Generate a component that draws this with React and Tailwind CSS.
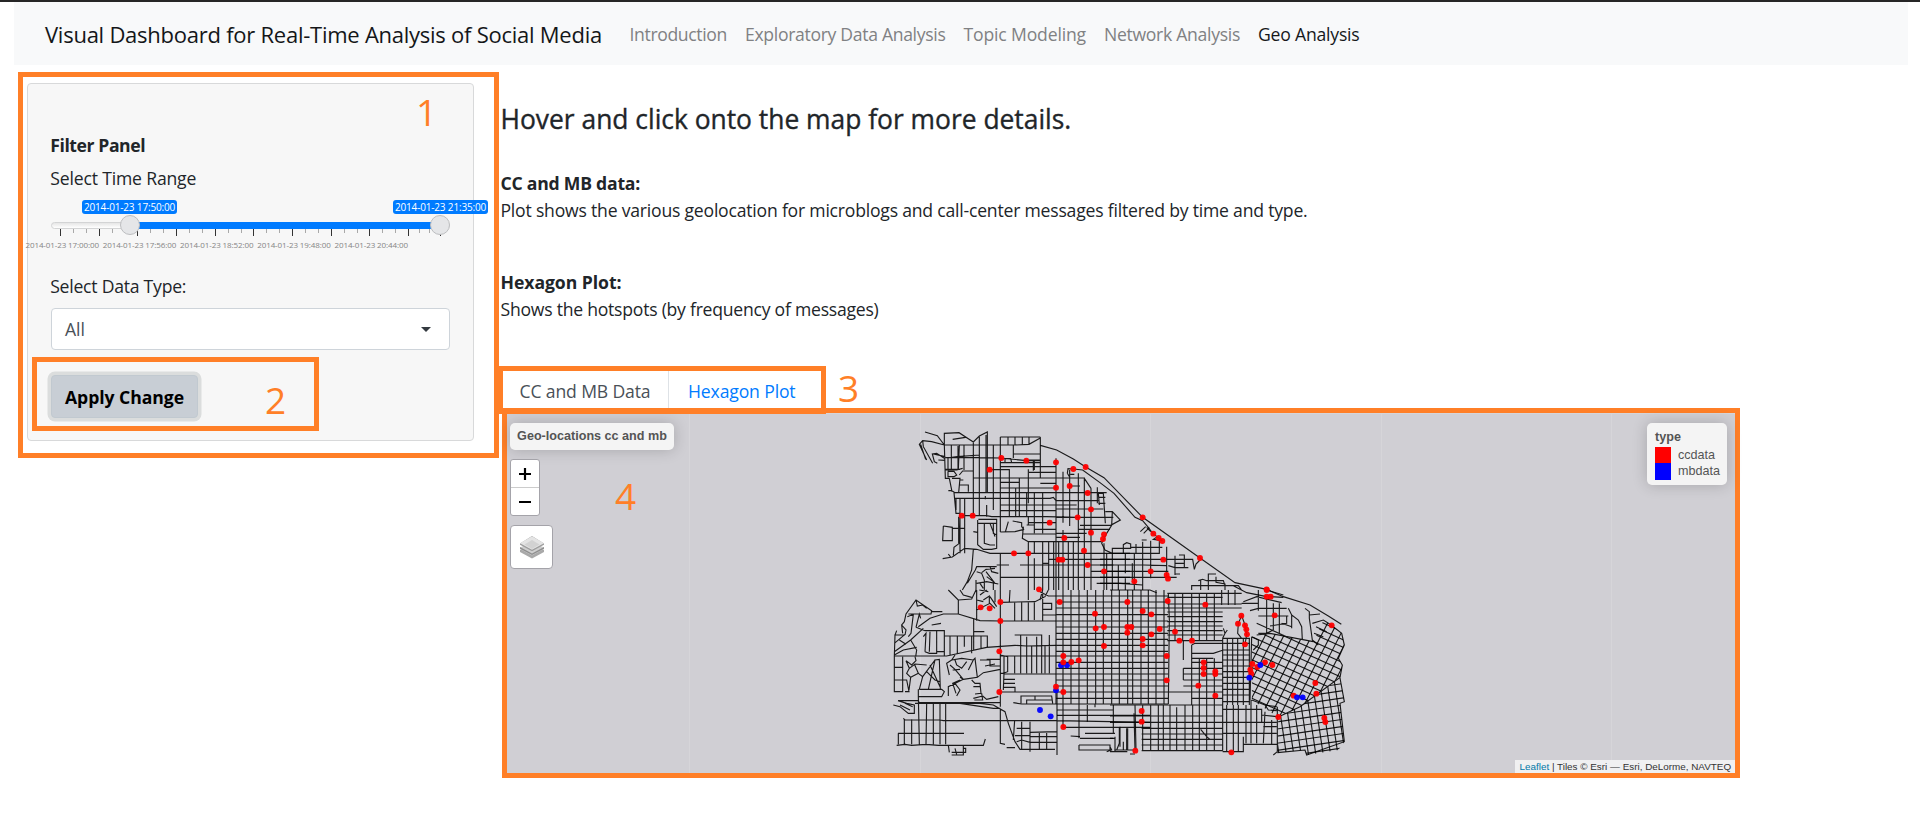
const NAV = [
  { label: "Introduction", cls: "w-[97.5px] tracking-[-0.36px] text-[#808183]" },
  { label: "Exploratory Data Analysis", cls: "w-[200.5px] tracking-[-0.32px] text-[#808183]" },
  { label: "Topic Modeling", cls: "w-[122.5px] tracking-[-0.161px] text-[#808183]" },
  { label: "Network Analysis", cls: "w-[136px] tracking-[-0.298px] text-[#808183]" },
  { label: "Geo Analysis", cls: "w-[101.5px] tracking-[-0.207px] text-[#16181a]" },
];

/* Street network, split in quadrants that share one drawing scale. */
const range = (a, b, n) => Array.from({ length: n }, (_, i) => a + ((b - a) * i) / (n - 1));
const hs = (ys, x1, x2) => ys.map((y) => `M${x1} ${y}H${x2}`).join("");
const vs = (xs, y1, y2) => xs.map((x) => `M${x} ${y1}V${y2}`).join("");

const COAST =
  "M481 106L530 120L580 147L617 171L672 203L788 322L960 444L1065 518L1160 538L1210 560L1290 585L1345 618L1384 643" +
  "M580 177L608 180L660 218L702 250L765 322L788 332L805 352L818 370L847 392";

const NW =
  "M135 66L172 77L193 105M193 105V70L237 68L280 96L298 78L322 66V246M218 88L256 82M193 105H405L447 103L481 84V204M361 81H481M361 81V366" +
  "M384 81V105M405 81V105M427 81V105M447 81V103M193 105L155 95L128 92L118 103L140 150M122 103L137 148M128 92L130 110L158 160" +
  "M193 145L170 130L157 132L163 155L172 160M160 132L196 140M175 150L196 151M193 105L196 205H208M204 143V182M214 105V180M234 108V178M252 105V180M238 105L235 178" +
  "M196 143H210L232 140L298 135L298 143H196M298 143L361 144L440 152H481M400 132H481M361 158H481M361 170H528M196 180H230L248 175" +
  "M204 184H222L230 195L222 200H204V184M238 195L248 183H280M196 178H240M280 96V315M298 80V315M318 75V246M340 105V300M320 285V320M316 258V268" +
  "M375 158V146H392L395 158M400 105V144M460 150V182M447 150H481M328 179H388V210M280 204H615M361 217H418V205M361 234H528M361 248H680M481 220H528" +
  "M445 178V280M447 187H528M463 150V180M528 145V342M418 217V318M388 190V318M407 235V318M440 248V318M463 248V318M488 248V318M205 242H215L225 248H361M208 205L216 245M216 205H240L236 248" +
  "M238 225H265V245M240 210H250M225 265H510L520 262L528 272M222 248L228 310H240M228 265V300M240 265V430M245 317H320L335 320H500L590 322M254 265V430M236 320V400" +
  "M361 285H590M361 302H528M528 272H655M528 297H670M190 348L188 392H217V352L190 348M217 355H254M188 446L217 441L254 415L290 418L330 430H700" +
  "M236 330L238 400L222 412L220 436M205 432L213 443M295 328H350V415L335 418H310L293 404V330M293 340H350M313 355V400L330 405H345M313 340V355M313 340H340V370L350 375" +
  "M280 365L293 367M330 340L345 380M361 366L405 365L432 358M385 335L376 366M398 333L425 338V350L432 360M430 350L427 385L445 395H665M427 372H528" +
  "M445 320V345M463 322V370M488 322V370M463 358H528M445 338H528M440 345H463M528 382H600M528 370H620M595 358H690M528 322H700" +
  "M549 185V338M569 180V348M595 190V540M613 205V540M633 235V540M652 232V280M613 205L633 235M652 250H670L676 340M655 262H676M655 280H676" +
  "M676 305H697L721 330L692 346H600M697 305L695 346L680 370L665 400L675 420L697 430H750M655 250L658 285M562 190L564 176L580 177M571 193H583M562 190L571 205M569 228H600" +
  "M445 395V540M463 395V430M488 395V460H505M463 445V540M506 395V540M521 394V540M536 394V540M549 360V540M565 394V540M580 394V540" +
  "M505 448H750M420 465H700M633 484H750M361 502H750M650 520H750M350 465H387M361 430V540M280 418L275 480L262 515L247 540" +
  "M286 480L290 470H350M286 480L262 520M290 485L305 490L313 510V540M305 488L318 478L345 475M290 520L320 515L355 522M318 485L345 520M320 500L340 515V540M288 510V540M330 470L335 485L355 490M300 520L310 535" +
  "M488 460V540M528 342V540";

const NE =
  "M121 365L137 350M131 370L148 353M152 365L140 352M172 380L160 388L187 392M37 430V415H92V402L80 398L70 404V428M37 430H178V390M92 412H187M108 402V430M128 395V500M125 390H140" +
  "M152 392V505M200 410V505M0 448H278L283 478L288 462L300 450M0 465H130L200 467M0 484H205M0 502H230M225 437V495M237 435H253V473M205 467L225 473H265M225 460H253M225 492H240" +
  "M12 400V540M20 430V540M37 430V540M55 465V540M76 430V490M97 460V510M103 430V540M128 500V540M0 520H60L128 525M76 505V540" +
  "M325 540V492H348M295 512L308 508L320 512M275 540V527H415L425 540M302 510V540M320 512H370L375 527M348 500V517L375 522V540M400 527L440 548L500 560";

const SW =
  "M43 307V198L45 135L50 122M43 135H75M43 160L75 133M43 185L92 150L130 115M43 195L70 180L110 172M58 150L78 163M43 198H200L320 172L405 166L440 168L528 166" +
  "M75 135L78 120L65 105L73 95L78 72L108 30L155 62L153 72H85M155 65H187M108 30L112 48L128 45L140 55M65 105L68 130M82 80L100 73L93 130L85 140M108 112L118 72L122 85M108 112L135 122H193" +
  "M115 110L150 85L190 72H235L300 92L361 93H528M235 72V30L205 0M235 30L275 27L288 0M240 0L250 15L275 22M290 0V92M290 60L330 40L345 55M300 15L320 0M310 30L328 18V40M330 20L350 50M345 0V37M290 30L310 35M298 0L325 5" +
  "M92 150L110 180L107 200M135 185L148 190H170V120M130 140L138 130L135 185M150 125L148 185M155 105L183 100M193 120V198M193 138H322V172M210 138V195M232 138V190M253 138V170M275 138V190M281 88V180M281 125H313M303 138V175M170 185H193" +
  "M68 200V305H43M43 232H68M43 270H80L87 305H75M78 212L95 225L108 212L105 200M78 212L88 235L80 250L92 262L115 250L103 222M88 235L105 222L140 225M92 262L87 300M115 250L128 260L165 210L178 208L181 298M118 298H185L193 305L185 320H115V298" +
  "M140 245L165 270L180 275M128 260L118 298M150 225L180 290M165 210L145 298M208 255L200 220L215 210L225 195M215 210L245 205L280 210L285 205L292 262L250 268L205 290V318M225 210L230 225L245 235L260 215M210 225L225 238L250 268M218 240L240 238" +
  "M225 280L240 300L230 318M240 270L218 280L228 310M250 268L240 262M280 210L265 240M292 262L310 248L361 238M300 210H330V228H361M315 228L345 222M320 208H361M275 270L285 280H300L303 310L285 312M280 290H300M283 330H308L305 310M308 318L320 328L355 320M280 325L308 318" +
  "M361 0V350M361 37L465 35L495 20L505 0M390 0L388 35M404 37V93M425 37V93M445 37V93M463 35V90M488 12V93M488 40H515V58H488M488 75H528M445 0V30M361 198H528M361 195L383 200V245L370 250M361 250H372V198M404 198V250M404 135H485V250" +
  "M422 135V250M440 140V250M455 168V250M470 140V250M508 135V250M495 168V250M372 250L370 300M372 268H405M372 280H405M372 292H405V306M370 252H528M361 306H528M400 338L425 342H528M423 340V318H515L518 340M440 342V330H515M465 318V330" +
  "M54 332H115L118 340H300L340 345L361 357L375 365L385 400L405 455L420 478H450M105 340H240L340 355H361M40 345L60 350L85 370H103V345L80 340L54 332M60 345L90 360M75 340L98 350M115 338H361M115 320L118 463M140 340L138 463M160 340V463M180 340V463M197 340V463" +
  "M70 385L75 390H180L190 392H530L810 397M73 388V463M95 388V463M55 430V463M54 430H252M50 466L75 463L95 466L138 463L175 466H310L316 447M205 466L208 487M215 495H250V466M225 475L230 493M250 475H257V487H215" +
  "M361 357V460L375 463M380 473H405M404 390L400 450M425 395V478M450 395V485M410 415H450M405 437H450M410 455L425 450L450 457H530M450 427L530 425M450 440H530M450 478H525M478 427V480M500 427V480M531 300V495M572 438L600 440" +
  "M488 0L480 30M480 5L505 18H528";

const CENTER =
  hs([18, 36, 54, 74, 93, 111, 130, 148, 166, 184, 198, 217, 235, 252, 270, 288, 306, 325, 342], 528, 864) +
  vs([528, 549, 573, 597, 622, 647, 670, 695, 718, 743, 758, 783, 805, 828, 852], 0, 342) +
  "M531 360H700M531 376H810M549 342V412H810M615 430H705M600 445H700M597 465H690V480H597V465M597 342V445M622 345V395M645 342V352M700 345V430M718 410V460L710 480M743 415V480M762 370L765 480M680 485L695 480L690 470M704 480H762";

const SE =
  "M175 10L178 90L175 342M220 150V210M220 235V270" +
  hs([10, 22, 42, 54, 66, 80, 95, 108, 122, 135, 152], 172, 338) +
  vs([195, 218, 245, 268, 290, 313], 8, 152) +
  "M335 0V45M355 0V45M375 0V45M330 10H395M330 42H395M0 0H120L140 8M338 54H395M245 165L255 160H345M245 190H310L340 180M245 165V345M245 205H310" +
  hs([235, 252, 270, 288], 220, 338) +
  hs([217, 325], 245, 338) + hs([306, 345], 175, 338) +
  vs([268, 290, 313], 205, 345) +
  vs([338, 352, 368, 383, 400, 418], 145, 345) +
  hs([145, 160, 180, 195, 210, 228, 245, 262, 280, 298, 315, 335], 338, 420) +
  hs([378, 397, 415, 432, 448, 465, 482], 95, 338) +
  vs([98, 122, 145, 160, 180, 225, 248, 268, 290, 313, 338], 345, 482) +
  "M75 345L78 480M0 345H175M0 378H95M0 397H95M200 352V482M272 418L290 440L300 448M50 415V480M30 410V470M15 440V485M0 445H15M0 485H52M60 492H75M40 455V480" +
  "M338 358H455V397M338 397H500M338 430H500M338 485H400V440M400 463H502M350 345V485M370 345V485M385 345V485M408 345V460M423 330V460M440 345V460M465 365L460 460M485 390V463M455 375L500 380M460 410H500M465 345L500 350M425 330L465 345L475 360L500 362M502 350V485M490 495L502 485" +
  "M395 145L383 130L385 100L395 77L405 105L410 135L405 162M340 115L345 130L352 120M345 130L338 145M400 35L440 20L515 38M395 40L445 40M420 62L445 55H530M445 78H535M440 100L480 118L530 140M480 108L530 100V78M445 130L470 130L490 120M445 0V62M470 25V130M490 40V120M508 40V130M515 100L545 110M545 75V115M470 0L520 15M480 20L520 22" +
  "M425 140L445 150V165L430 180M535 55L545 75L565 90L575 110L577 150M585 55L598 65V85L607 150L625 165M598 75L630 72M607 100L640 90L665 106M618 110L650 125M612 130L640 140" +
  "M665 106L695 130L703 165L685 205L697 225L690 262L570 350L505 381M425 140L420 330M440 135L480 130L610 155";

const TILT_A = range(-240, 336, 26).map((y) => `M400 ${y}L720 ${y + 145}`).join("");
const TILT_B = range(330, 890, 21).map((x) => `M${x} 400L${x + 170} 70`).join("");
const TILT_C = range(290, 590, 15).map((y) => `M490 ${y}L715 ${y - 33}`).join("");
const TILT_D = range(450, 715, 13).map((x) => `M${x} 260L${x + 36} 500`).join("");

/* Message locations as x, y pairs in the same units as the quadrants. */
const RED_NW = [364,144,439,152,329,179,528,157,580,177,617,171,569,228,528,233,623,249,633,298,593,322,509,338,245,317,278,317,633,368,672,373,669,387,553,384,612,422,402,430,445,430,536,449,547,449,623,465,672,484,477,538];
const RED_NE = [128,322,160,371,176,384,187,393,190,449,300,444,152,484,200,495,204,506,103,514,500,538];
const RED_SW = [361,36,302,52,329,55,361,93,539,36,645,71,647,115,672,111,742,111,742,128,358,184,672,168,550,198,550,217,574,216,596,211,528,290,550,306,358,306,550,411];
const RED_SE = [52,36,173,33,98,63,124,73,64,111,149,117,195,125,124,133,98,147,98,166,208,152,246,152,286,44,470,0,470,20,482,20,494,76,394,77,384,101,405,106,409,118,411,133,405,163,665,106,170,198,170,271,281,217,281,234,281,252,316,244,316,252,265,287,316,317,427,222,442,231,465,217,487,225,421,239,424,251,551,317,616,279,619,311,505,381,643,384,646,396,95,363,95,395,76,482,364,487];
const BLUE_SW = [543,226,561,226,528,301,480,360,512,379];
const BLUE_SE = [451,225,418,263,561,322,578,322];

function Dots({ pts, color }) {
  const out = [];
  for (let i = 0; i < pts.length; i += 2) out.push(<circle key={i} cx={pts[i]} cy={pts[i + 1]} r="8.8" fill={color} fillOpacity="0.95" />);
  return <g>{out}</g>;
}

function StreetMap() {
  const street = { fill: "none", stroke: "#000", strokeOpacity: 0.88, strokeWidth: 3.4 };
  return (
    <svg className="col-start-1 row-start-1 block h-[360px] w-[1228px]" viewBox="507 413 1228 360">
      <defs>
        <clipPath id="tiltUpper"><path d="M425 140L480 130L610 155L640 92L665 106L695 130L703 165L685 205L697 225L690 262L570 350L505 381L425 330Z" /></clipPath>
        <clipPath id="tiltLower"><path d="M505 383L570 350L690 264L703 335L690 340L703 455L685 480L590 495L585 480L502 488Z" /></clipPath>
      </defs>
      <path d="M507 413.5H1735M689.5 413V773M920.5 413V773M1150.500 413V773M1381.5 413V773M1611.5 413V773" stroke="#d6d5d9" strokeWidth="1" />
      <g transform="translate(880 410) scale(.33333)" {...street}><path d={COAST} /><path d={NW} /></g>
      <g transform="translate(1100 410) scale(.33333)" {...street}><path d={NE} /></g>
      <g transform="translate(880 590) scale(.33333)" {...street}><path d={SW} /><path d={CENTER} /></g>
      <g transform="translate(1110 590) scale(.33333)" {...street}>
        <path d={SE} />
        <g clipPath="url(#tiltUpper)"><path d={TILT_A} /><path d={TILT_B} /></g>
        <g clipPath="url(#tiltLower)"><path d={TILT_C} /><path d={TILT_D} /></g>
        <path d="M690 264L703 335L690 340L703 455L590 495L585 480L502 488" />
      </g>
      <g transform="translate(880 410) scale(.33333)"><Dots pts={RED_NW} color="#f00" /></g>
      <g transform="translate(1100 410) scale(.33333)"><Dots pts={RED_NE} color="#f00" /></g>
      <g transform="translate(880 590) scale(.33333)"><Dots pts={BLUE_SW} color="#00f" /><Dots pts={RED_SW} color="#f00" /></g>
      <g transform="translate(1110 590) scale(.33333)"><Dots pts={RED_SE} color="#f00" /><Dots pts={BLUE_SE} color="#00f" /></g>
    </svg>
  );
}

const TALL = [60.5, 99.5, 137.5, 176.5, 215.5, 253.5, 292.5, 331.5, 369.5, 408.5, 440.5];
const SHORT = [73.5, 86.5, 112.5, 150.5, 163.5, 189.5, 202.5, 228.5, 241.5, 266.5, 279.5, 305.5, 318.5, 344.5, 357.5, 382.5, 395.5, 419.5, 429.5];
const LABELS = ["2014-01-23 17:00:00", "2014-01-23 17:56:00", "2014-01-23 18:52:00", "2014-01-23 19:48:00", "2014-01-23 20:44:00"];

function Tip({ children }) {
  return <span className="h-[14px] w-[95px] whitespace-nowrap rounded-[3px] bg-[#007bff] text-center text-[10px] leading-[14px] tracking-[-0.17px] text-white">{children}</span>;
}

function TimeSlider() {
  return (
    <div className="mt-[10px] flex h-[72px] w-[399px] flex-col">
      <div className="relative z-20 ml-[31px] flex w-[406px] justify-between">
        <Tip>2014-01-23 17:50:00</Tip>
        <Tip>2014-01-23 21:35:00</Tip>
      </div>
      <div className="relative mt-2 h-[7px] rounded-[4px] border border-[#d3d4d5] bg-gradient-to-b from-[#e6e6e6] to-white">
        <div className="-my-px ml-[86px] h-[7px] w-[294px] bg-[#007bff]" />
        <i className="absolute -top-2 left-[67.5px] z-10 size-5 rounded-full border border-[#bdbec0] bg-[#e5e6e8]" />
        <i className="absolute -top-2 left-[378px] z-10 size-5 rounded-full border border-[#bdbec0] bg-[#e5e6e8]" />
      </div>
      <svg className="h-[8px] w-[399px]" viewBox="51 229 399 8" shapeRendering="crispEdges">
        <path d={vs(TALL, 229, 236)} stroke="#333" strokeWidth="1" />
        <path d={vs(SHORT, 229, 233)} stroke="#a9a9a9" strokeWidth="1" />
      </svg>
      <div className="-ml-[25.5px] mt-[2px] flex gap-[3.75px] text-[8px] leading-[12px] tracking-[-0.11px] text-[#858585]">
        {LABELS.map((l) => <span key={l} className="w-[73.5px] whitespace-nowrap">{l}</span>)}
      </div>
    </div>
  );
}

function MapControls() {
  return (
    <div className="relative col-start-1 row-start-1 flex justify-between pl-[3px] pr-2 pt-[10px]">
      <div className="flex flex-col items-start gap-[9px]">
        <div className="h-[27px] w-[164px] whitespace-nowrap rounded-[5px] bg-[#f4f4f4] text-center font-bold leading-[27px] shadow-[0_0_15px_rgba(0,0,0,0.2)]">Geo-locations cc and mb</div>
        <div className="flex h-[57px] w-[30px] flex-col overflow-hidden rounded-[3px] border border-[#a4a3a9] bg-white">
          <div className="flex flex-1 items-center justify-center border-b border-[#ccc]">
            <svg className="size-[12px]" viewBox="0 0 12 12"><path d="M0 6H12M6 0V12" stroke="#000" strokeWidth="2.2" /></svg>
          </div>
          <div className="flex flex-1 items-center justify-center">
            <svg className="size-[12px]" viewBox="0 0 12 12"><path d="M0 6H12" stroke="#000" strokeWidth="2.2" /></svg>
          </div>
        </div>
        <div className="flex h-[44px] w-[43px] items-center justify-center rounded-[4px] border border-[#a4a3a9] bg-white">
          <svg className="h-[23px] w-[24px]" viewBox="0 0 24 23">
            <path d="M0 14L12 8L24 14V16L12 22.5L0 16Z" fill="#a9a9a9" />
            <path d="M0 11.5L12 6L24 11.5V13L12 19.5L0 13Z" fill="#cfcfcf" />
            <path d="M0 11L12 17.5L24 11V12.8L12 19L0 12.8Z" fill="#8f8f8f" />
            <path d="M0 7.5L12 0L24 7.5V8.800L12 15.3L0 8.8Z" fill="#9d9d9d" />
            <path d="M0 7.2L12 .3L24 7.2L12 13.8Z" fill="#e4e4e4" />
            <path d="M4.5 8.5L12 4L19.5 8.5L12 13Z" fill="#d2d2d2" />
          </svg>
        </div>
      </div>
      <div className="h-[62px] w-[80px] rounded-[5px] bg-[#f4f4f4] pl-2 pt-[6px] leading-[16px] shadow-[0_0_15px_rgba(0,0,0,0.2)]">
        <div className="h-[18px] font-bold">type</div>
        <div className="flex h-4 gap-[7px]"><i className="size-4 bg-[#f00]" />ccdata</div>
        <div className="flex h-4 gap-[7px]"><i className="h-[17px] w-4 bg-[#00f]" />mbdata</div>
      </div>
    </div>
  );
}

export default function App() {
  return (
    <div className="relative h-[819px] w-[1920px] overflow-hidden bg-white font-['Open_Sans','Noto_Sans',sans-serif] text-[17.6px] leading-[26.4px] text-[#212529]">
      <div className="h-[2px] bg-[#262626]" />
      <header className="ml-[14px] flex h-[63px] w-[1894px] items-center bg-[#f8f9fa] pl-[31px] pt-px">
        <div className="w-[584.5px] whitespace-nowrap text-[22px] tracking-[-0.25px] text-[#141618]">Visual Dashboard for Real-Time Analysis of Social Media</div>
        <nav className="flex gap-[18px]">
          {NAV.map((n) => <a key={n.label} className={"whitespace-nowrap " + n.cls}>{n.label}</a>)}
        </nav>
      </header>

      <div className="flex gap-[26.5px] pl-[27px]">
        <aside className="mt-[18px] h-[358px] w-[447px] shrink-0 rounded-[4px] border border-[#d8d9da] bg-[#f7f7f7] pl-[23px] pt-[48px]">
          <div className="-ml-[0.8px] font-bold tracking-[-0.416px]">Filter Panel</div>
          <div className="-ml-[0.8px] mt-[6.6px] tracking-[-0.167px]">Select Time Range</div>
          <div className="-mt-px"><TimeSlider /></div>
          <div className="-ml-[0.8px] mt-px tracking-[-0.238px]">Select Data Type:</div>
          <div className="mt-[8.6px] flex h-[42px] w-[399px] items-center justify-between rounded-[4px] border border-[#ced4da] bg-white pl-[13px] pr-[18px] text-[#495057]">
            <span>All</span>
            <svg className="h-[5px] w-[10px]" viewBox="0 0 10 5"><path d="M0 0H10L5 5Z" fill="#343a40" /></svg>
          </div>
          <button className="mt-[25px] flex h-[43px] w-[147px] items-center justify-center rounded-[4px] border border-[#c1c9d0] bg-[#c8ced5] font-bold tracking-[-0.054px] text-black shadow-[0_0_0_3.5px_#dbdddd]">Apply Change</button>
        </aside>

        <main className="w-[1242px] pt-[37.8px]">
          <h4 className="text-[26.4px] font-medium leading-[32px] [-webkit-text-stroke:0.35px_#212529]">Hover and click onto the map for more details.</h4>
          <div className="mt-[34.8px] font-bold tracking-[-0.227px]">CC and MB data:</div>
          <div className="mt-[0.6px] tracking-[-0.21px]">Plot shows the various geolocation for microblogs and call-center messages filtered by time and type.</div>
          <div className="mt-[45.6px] font-bold tracking-[-0.045px]">Hexagon Plot:</div>
          <div className="mt-[0.6px] tracking-[-0.242px]">Shows the hotspots (by frequency of messages)</div>
          <div className="mt-[49px] flex h-[37px] pl-[1.5px]">
            <div className="w-[167px] border-r border-[#dee2e6] pl-[17.5px] pt-[7px] tracking-[-0.142px] text-[#495057]">CC and MB Data</div>
            <div className="pl-[19px] pt-[7px] tracking-[-0.143px] text-[#007bff]">Hexagon Plot</div>
          </div>
          <section className="relative ml-[1.5px] grid h-[370px] w-[1238px] border-[5px] border-[#ff7f27] bg-[#d0cfd4] font-['Liberation_Sans',Arial,sans-serif] text-[12.6px] text-[#555]">
            <StreetMap />
            <MapControls />
            <div className="relative col-start-1 row-start-1 h-[13px] w-[220px] self-end justify-self-end whitespace-nowrap bg-[#f0f0f1] pl-[4.5px] text-[9.9px] leading-[13px] text-[#333]"><span className="text-[#0078a8]">Leaflet</span> | Tiles © Esri — Esri, DeLorme, NAVTEQ</div>
          </section>
        </main>
      </div>

      <div className="absolute left-[18px] top-[72px] h-[386px] w-[481px] border-[5px] border-[#ff7f27] pl-[393px] pt-[15px] text-[37px] leading-[40px] text-[#ff7f27]">1</div>
      <div className="absolute left-[32px] top-[357px] h-[74px] w-[287px] border-[5px] border-[#ff7f27] pl-[228px] pt-[18px] text-[37px] leading-[40px] text-[#ff7f27]">2</div>
      <div className="absolute left-[498px] top-[366px] flex gap-3 text-[37px] leading-[40px] text-[#ff7f27]">
        <div className="h-[48px] w-[328px] border-[5px] border-[#ff7f27]" />
        <span className="pt-[2px]">3</span>
      </div>
      <div className="absolute left-[615px] top-[476px] text-[37px] leading-[40px] text-[#ff7f27]">4</div>
    </div>
  );
}
